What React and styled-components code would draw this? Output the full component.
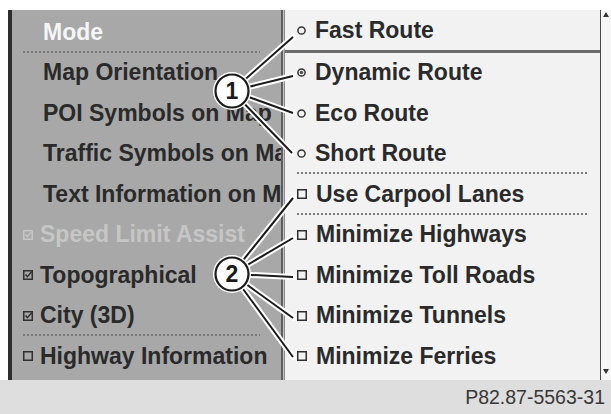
import React from 'react'
import styled, { createGlobalStyle } from 'styled-components'

const GlobalStyle = createGlobalStyle`
  html, body {
    margin: 0;
    background: #fff;
  }
`

const Figure = styled.div`
  position: relative;
  width: 611px;
  height: 414px;
  padding-top: 10px;
  box-sizing: border-box;
  display: flex;
  flex-direction: column;
  font-family: 'Liberation Sans', Arial, sans-serif;
  overflow: hidden;
`

const Screen = styled.div`
  display: flex;
  height: 370px;
  margin-left: 8px;
  border-left: 4px solid #2e2e2e;
`

const LeftPanel = styled.div`
  width: 269px;
  background: #a8a8a8;
  overflow: hidden;
  padding-top: 2px;
`

const Divider = styled.div`
  width: 4px;
  box-sizing: border-box;
  background: #c4c4c4;
  border-left: 2px solid #5e5e5e;
  border-right: 1px solid #8a8a8a;
`

const RightPanel = styled.div`
  width: 315px;
  background: #f2f2f2;
  padding-top: 2px;
`

const Scrollbar = styled.div`
  flex: 1;
  display: flex;
  flex-direction: column;
  justify-content: space-between;
  align-items: center;
  border-left: 1px solid #4a4a4a;
  background: #f6f6f6;
  padding: 2px 0 6px;
`

const Arrow = styled.div`
  width: 0;
  height: 0;
  border-left: 3px solid transparent;
  border-right: 3px solid transparent;
  ${({ $down }) => $down ? 'border-top: 5px solid #333;' : 'border-bottom: 5px solid #333;'}
`

const dots = 'linear-gradient(to right, #7a7a7a 45%, transparent 0) bottom left / 4px 2px repeat-x'

const Row = styled.div`
  height: 40.5px;
  box-sizing: border-box;
  display: flex;
  align-items: center;
  gap: ${({ $gap }) => $gap || 7}px;
  margin: ${({ $full }) => $full ? '0' : '0 21px 0 11px'};
  padding-left: ${({ $indent }) => $indent || 0}px;
  white-space: nowrap;
  font-size: 23px;
  font-weight: bold;
  color: ${({ $tone }) => $tone === 'active' ? '#f6f6f6' : $tone === 'off' ? '#c6c6c6' : '#2a2a2a'};
  background: ${({ $sep }) => $sep ? dots : 'none'};
  border-bottom: ${({ $solid }) => $solid ? '3px solid #6b6b6b' : 'none'};
`

const RightRow = styled(Row)`
  margin: ${({ $full }) => $full ? '0' : '0 13px 0 12px'};
  gap: 9px;
  color: #2a2a2a;
`

const Footer = styled.div`
  flex: 1;
  background: #dedede;
  display: flex;
  align-items: center;
  justify-content: flex-end;
  padding-right: 6px;
  font-size: 19.5px;
  color: #383838;
`

const Overlay = styled.svg`
  position: absolute;
  left: 0;
  top: 0;
  pointer-events: none;
`

function Check({ checked, color = '#2f2f2f' }) {
  return (
    <svg width="10" height="10" viewBox="0 0 10 10" style={{ flex: 'none' }}>
      <rect x="0.75" y="0.75" width="8.5" height="8.5" fill="none" stroke={color} strokeWidth="1.5" />
      {checked && <path d="M2.5 4.6 L4.4 6.6 L8.6 1.8" fill="none" stroke={color} strokeWidth="1.4" />}
    </svg>
  )
}

function Radio({ on }) {
  return (
    <svg width="9" height="9" viewBox="0 0 9 9" style={{ flex: 'none' }}>
      <circle cx="4.5" cy="4.5" r="3.6" fill="none" stroke="#333" strokeWidth="1.5" />
      {on && <circle cx="4.5" cy="4.5" r="1.8" fill="#555" />}
    </svg>
  )
}

const leftItems = [
  { label: 'Mode', tone: 'active', sep: true },
  { label: 'Map Orientation' },
  { label: 'POI Symbols on Map' },
  { label: 'Traffic Symbols on Map' },
  { label: 'Text Information on Map' },
  { label: 'Speed Limit Assist', box: 'checked', tone: 'off' },
  { label: 'Topographical', box: 'checked' },
  { label: 'City (3D)', box: 'checked', sep: true },
  { label: 'Highway Information', box: 'empty' },
]

const rightItems = [
  { label: 'Fast Route', kind: 'radio', solid: true },
  { label: 'Dynamic Route', kind: 'radio', on: true },
  { label: 'Eco Route', kind: 'radio' },
  { label: 'Short Route', kind: 'radio', sep: true },
  { label: 'Use Carpool Lanes', kind: 'box', sep: true },
  { label: 'Minimize Highways', kind: 'box' },
  { label: 'Minimize Toll Roads', kind: 'box' },
  { label: 'Minimize Tunnels', kind: 'box' },
  { label: 'Minimize Ferries', kind: 'box' },
]

const callouts = [
  { n: '1', cx: 232, cy: 91, ends: [[293, 37], [293, 76], [293, 113], [292, 153]] },
  { n: '2', cx: 232, cy: 274, ends: [[293, 198], [293, 238], [293, 277], [293, 318], [293, 357]] },
]

function Callouts() {
  return (
    <Overlay width="611" height="414" viewBox="0 0 611 414">
      {callouts.map(c => (
        <g key={c.n}>
          {c.ends.map(([x, y], i) => (
            <line key={'h' + i} x1={c.cx} y1={c.cy} x2={x} y2={y} stroke="#fff" strokeWidth="6" strokeLinecap="round" />
          ))}
          {c.ends.map(([x, y], i) => (
            <line key={'l' + i} x1={c.cx} y1={c.cy} x2={x} y2={y} stroke="#1a1a1a" strokeWidth="2" />
          ))}
          <circle cx={c.cx} cy={c.cy} r="19" fill="#fff" />
          <circle cx={c.cx} cy={c.cy} r="16.5" fill="#fff" stroke="#1a1a1a" strokeWidth="2.2" />
          <text x={c.cx} y={c.cy + 8} textAnchor="middle" fontFamily="'Liberation Sans', Arial, sans-serif" fontWeight="bold" fontSize="23" fill="#1a1a1a">{c.n}</text>
        </g>
      ))}
    </Overlay>
  )
}

export default function App() {
  return (
    <>
      <GlobalStyle />
      <Figure>
        <Screen>
          <LeftPanel>
            {leftItems.map(item => (
              <Row key={item.label} $tone={item.tone} $sep={item.sep} $indent={item.box ? 0 : 20}>
                {item.box && <Check checked={item.box === 'checked'} color={item.tone === 'off' ? '#c6c6c6' : '#2f2f2f'} />}
                {item.label}
              </Row>
            ))}
          </LeftPanel>
          <Divider />
          <RightPanel>
            {rightItems.map(item => (
              <RightRow key={item.label} $sep={item.sep} $solid={item.solid} $full={item.solid} $indent={item.solid ? 12 : 0}>
                {item.kind === 'radio' ? <Radio on={item.on} /> : <Check />}
                {item.label}
              </RightRow>
            ))}
          </RightPanel>
          <Scrollbar>
            <Arrow />
            <Arrow $down />
          </Scrollbar>
        </Screen>
        <Footer>P82.87-5563-31</Footer>
        <Callouts />
      </Figure>
    </>
  )
}
